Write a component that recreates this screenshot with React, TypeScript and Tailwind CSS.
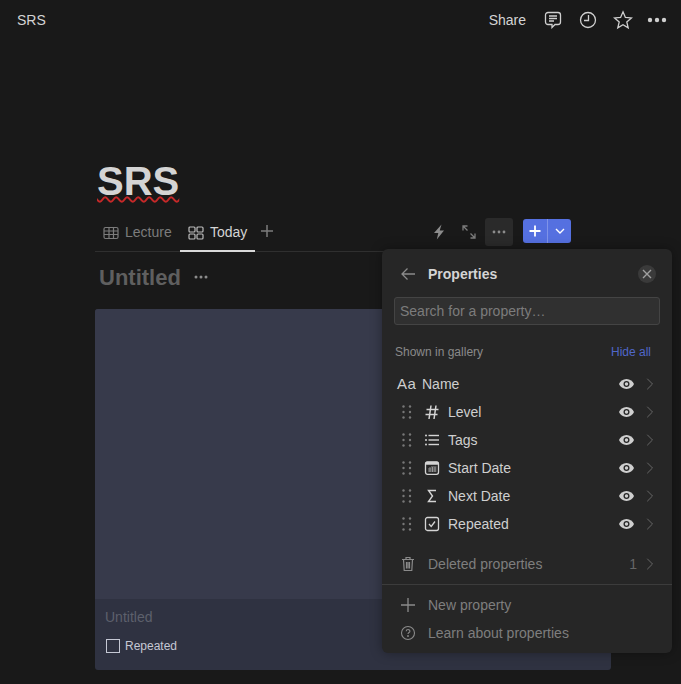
import { ChevronRight } from "lucide-react";

function Grip() {
  return (
    <svg width="10" height="14" viewBox="0 0 10 14" fill="#777777" className="shrink-0">
      {[1.500, 7, 12.500].map((y) =>
        [1.500, 8].map((x) => <circle key={`${x}-${y}`} cx={x} cy={y} r="1.200" />)
      )}
    </svg>
  );
}

function EyeIcon() {
  return (
    <svg width="17" height="12" viewBox="0 0 16 12">
      <path d="M8 1C4.500 1 1.700 3.200 0.500 6 1.700 8.800 4.500 11 8 11s6.300-2.200 7.500-5C14.300 3.200 11.500 1 8 1z" fill="#cfcfcf" />
      <circle cx="8" cy="6" r="3" fill="#262626" />
      <circle cx="8" cy="6" r="1.700" fill="#cfcfcf" />
    </svg>
  );
}

function TypeIcon({ type }: { type: string }) {
  if (type === "hash")
    return (
      <svg width="16" height="16" viewBox="0 0 16 16" fill="none" stroke="#d4d4d4" strokeWidth="1.500">
        <path d="M7 1.500 5 15M12 1.500l-2 13.500M2.500 5.500h12M1.500 10.500h12" />
      </svg>
    );
  if (type === "list")
    return (
      <svg width="16" height="16" viewBox="0 0 16 16" fill="#d4d4d4">
        <rect x="1" y="2.500" width="2" height="2" rx="1" />
        <rect x="1" y="7" width="2" height="2" rx="1" />
        <rect x="1" y="11.500" width="2" height="2" rx="1" />
        <rect x="4.500" y="2.800" width="10.500" height="1.400" />
        <rect x="4.500" y="7.300" width="10.500" height="1.400" />
        <rect x="4.500" y="11.800" width="10.500" height="1.400" />
      </svg>
    );
  if (type === "date")
    return (
      <svg width="16" height="16" viewBox="0 0 16 16" fill="none">
        <rect x="1.500" y="1.800" width="13" height="12.500" rx="2" stroke="#d4d4d4" strokeWidth="1.300" />
        <rect x="1.500" y="1.800" width="13" height="3" rx="1" fill="#d4d4d4" />
        <path d="M7 7h5.500M4 9h8.500M4 11h8.500M6 7v5M8.500 7v5M11 7v5" stroke="#a8a8a8" strokeWidth="0.800" />
      </svg>
    );
  if (type === "sigma")
    return (
      <svg width="16" height="16" viewBox="0 0 16 16" fill="none" stroke="#d4d4d4" strokeWidth="1.400">
        <path d="M12 2.500H4.500L8.500 8 4.500 13.500H12" />
      </svg>
    );
  return (
    <svg width="16" height="16" viewBox="0 0 16 16" fill="none" stroke="#d4d4d4" strokeWidth="1.300">
      <rect x="1.500" y="1.500" width="13" height="13" rx="2" />
      <path d="M5 8l2.200 2.500L11 5.500" />
    </svg>
  );
}

const rows = [
  { name: "Level", type: "hash" },
  { name: "Tags", type: "list" },
  { name: "Start Date", type: "date" },
  { name: "Next Date", type: "sigma" },
  { name: "Repeated", type: "check" },
];

function RowEnd() {
  return (
    <div className="ml-auto flex items-center gap-[5px]">
      <EyeIcon />
      <ChevronRight size={20} color="#666666" strokeWidth={1.200} />
    </div>
  );
}

function PropertiesPanel() {
  return (
    <div className="absolute left-[382px] top-[249px] h-[404px] w-[290px] rounded-md bg-[#262626] text-[14px] shadow-[0_0_12px_rgba(0,0,0,0.35)]">
      <div className="flex h-[50px] items-center pl-[18px] pr-[16px]">
        <svg width="16" height="14" viewBox="0 0 16 14" fill="none" stroke="#8a8a8a" strokeWidth="1.300">
          <path d="M15 7H2M7.500 1.500 2 7l5.500 5.500" />
        </svg>
        <span className="ml-[12px] font-bold text-[#d4d4d4]">Properties</span>
        <div className="ml-auto flex h-[18px] w-[18px] items-center justify-center rounded-full bg-[#3a3a3a]">
          <svg width="10" height="10" viewBox="0 0 10 10" stroke="#a0a0a0" strokeWidth="1.400">
            <path d="M1 1l8 8M9 1l-8 8" />
          </svg>
        </div>
      </div>
      <div className="mx-[12px] mt-[-2px] flex h-[28px] items-center rounded-[3px] border border-[#444444] bg-[#303030] px-[5px] text-[#7c7c7c]">
        Search for a property…
      </div>
      <div className="mt-[18px] flex items-center justify-between pl-[13px] pr-[21px] text-[12px]">
        <span className="text-[#8a8a8a]">Shown in gallery</span>
        <span className="text-[#5067c9]">Hide all</span>
      </div>
      <div className="mt-[9px]">
        <div className="flex h-[28px] items-center pl-[15px] pr-[12px] text-[#cfcfcf]">
          <span className="w-[25px] text-[15px] font-medium tracking-[0.5px]">Aa</span>
          <span>Name</span>
          <RowEnd />
        </div>
        {rows.map((row) => (
          <div key={row.name} className="flex h-[28px] items-center pl-[20px] pr-[12px] text-[#cfcfcf]">
            <Grip />
            <div className="ml-[12px] flex w-[22px] shrink-0">
              <TypeIcon type={row.type} />
            </div>
            <span className="ml-[2px]">{row.name}</span>
            <RowEnd />
          </div>
        ))}
      </div>
      <div className="mt-[12px] flex h-[28px] items-center pl-[18px] pr-[12px] text-[#7e7e7e]">
        <svg width="16" height="16" viewBox="0 0 16 16" fill="none" stroke="#8a8a8a" strokeWidth="1.200">
          <path d="M2 3.500h12M6 3.500V1.500h4v2M3.500 3.500l.7 11h7.600l.7-11M6.500 6v6.500M8 6v6.500M9.500 6v6.500" />
        </svg>
        <span className="ml-[12px]">Deleted properties</span>
        <div className="ml-auto flex items-center gap-[3px] text-[#666666]">
          <span>1</span>
          <ChevronRight size={20} color="#666666" strokeWidth={1.200} />
        </div>
      </div>
      <div className="mt-[6px] border-t border-[#3c3c3c] pt-[6px]">
        <div className="flex h-[28px] items-center pl-[18px] text-[#7e7e7e]">
          <svg width="16" height="16" viewBox="0 0 16 16" stroke="#8a8a8a" strokeWidth="1.300">
            <path d="M8 1v14M1 8h14" />
          </svg>
          <span className="ml-[12px]">New property</span>
        </div>
        <div className="flex h-[28px] items-center pl-[18px] text-[#7e7e7e]">
          <svg width="16" height="16" viewBox="0 0 16 16" fill="none" stroke="#8a8a8a" strokeWidth="1.100">
            <circle cx="8" cy="8" r="6.500" />
            <path d="M6.200 6.300C6.300 4 9.900 4 9.900 6.200 9.900 7.500 8 7.600 8 9" />
            <circle cx="8" cy="11" r="0.400" />
          </svg>
          <span className="ml-[12px]">Learn about properties</span>
        </div>
      </div>
    </div>
  );
}

export default function App() {
  return (
    <div className="relative h-[684px] w-[681px] overflow-hidden bg-[#191919] font-['Liberation_Sans',sans-serif] text-[14px]">
      <div className="flex h-[40px] items-center pl-[17px] pr-[15px] text-[#d4d4d4]">
        <span>SRS</span>
        <div className="ml-auto flex items-center">
          <span>Share</span>
          <svg width="18" height="18" viewBox="0 0 18 18" fill="none" stroke="#cfcfcf" strokeWidth="1.300" className="ml-[18px]">
            <path d="M4 1.500h10a2.500 2.500 0 0 1 2.500 2.500v7a2.500 2.500 0 0 1-2.500 2.500h-3l-3 3v-3H4A2.500 2.500 0 0 1 1.500 11V4A2.500 2.500 0 0 1 4 1.500z" />
            <path d="M5 5h8M5 7.500h8M5 10h5" />
          </svg>
          <svg width="18" height="18" viewBox="0 0 18 18" fill="none" stroke="#cfcfcf" strokeWidth="1.300" className="ml-[17px]">
            <circle cx="9" cy="9" r="7.500" />
            <path d="M9.500 4v5.500H5" />
          </svg>
          <svg width="20" height="20" viewBox="0 0 20 20" fill="none" stroke="#cfcfcf" strokeWidth="1.300" className="ml-[16px]">
            <path d="M10 1.800l2.400 5.600 6 .5-4.600 4 1.400 5.900L10 14.700l-5.200 3.100 1.400-5.900-4.600-4 6-.5z" />
          </svg>
          <svg width="20" height="6" viewBox="0 0 20 6" fill="#cfcfcf" className="ml-[14px] mr-[-1px]">
            <circle cx="3" cy="3" r="2.200" />
            <circle cx="10" cy="3" r="2.200" />
            <circle cx="17" cy="3" r="2.200" />
          </svg>
        </div>
      </div>

      <div className="ml-[95px] mr-[70px] mt-[118px]">
        <h1 className="pl-[2px] text-[40px] font-bold leading-[46px] text-[#d4d4d4] underline decoration-[#c62828] decoration-wavy decoration-[1.5px] underline-offset-[1px]">
          SRS
        </h1>
        <div className="mt-[10px] flex h-[38px] items-center border-b border-[#2f2f2f] pr-[40px]">
          <div className="flex h-[38px] w-[85px] items-center pl-[8px] text-[#7c7c7c]">
            <svg width="16" height="14" viewBox="0 0 16 14" fill="none" stroke="#7c7c7c" strokeWidth="1.200">
              <rect x="1" y="1.500" width="14" height="11" rx="1.500" />
              <path d="M1 5h14M1 8.500h14M6 1.500v11M10.500 1.500v11" />
            </svg>
            <span className="ml-[6px]">Lecture</span>
          </div>
          <div className="flex h-[38px] w-[75px] items-center border-b-2 border-[#d9d9d9] pl-[8px] pt-[2px] text-[#d4d4d4]">
            <svg width="16" height="14" viewBox="0 0 16 14" fill="none" stroke="#bdbdbd" strokeWidth="1.200">
              <rect x="1" y="1" width="6" height="5" rx="1" />
              <rect x="9" y="1" width="6" height="5" rx="1" />
              <rect x="1" y="8" width="6" height="5" rx="1" />
              <rect x="9" y="8" width="6" height="5" rx="1" />
            </svg>
            <span className="ml-[6px]">Today</span>
          </div>
          <svg width="14" height="14" viewBox="0 0 14 14" stroke="#7c7c7c" strokeWidth="1.500" className="ml-[5px] mb-[4px]">
            <path d="M7 1v12M1 7h12" />
          </svg>
          <div className="ml-auto flex items-center pb-[2px]">
            <svg width="14" height="16" viewBox="0 0 14 16" fill="#8c8c8c">
              <path d="M9.500 0.500 2 9H6.300L4.800 15.500 12 6.500H7.700z" />
            </svg>
            <svg width="14" height="14" viewBox="0 0 14 14" fill="none" stroke="#7c7c7c" strokeWidth="1.300" className="ml-[16px]">
              <path d="M1 1l4.500 4.500M8.500 8.500L13 13M1 5.500V1h4.500M13 8.500V13H8.500" />
            </svg>
            <div className="ml-[9px] flex h-[28px] w-[28px] items-center justify-center rounded-[3px] bg-[#2a2a2a]">
              <svg width="14" height="4" viewBox="0 0 14 4" fill="#8c8c8c">
                <circle cx="2" cy="2" r="1.400" />
                <circle cx="7" cy="2" r="1.400" />
                <circle cx="12" cy="2" r="1.400" />
              </svg>
            </div>
            <div className="mb-[2px] ml-[10px] flex h-[24px] w-[48px] items-center rounded-[3px] bg-[#5570e0]">
              <div className="flex h-full w-[25px] items-center justify-center border-r border-[#7f93e8]">
                <svg width="12" height="12" viewBox="0 0 12 12" stroke="#ffffff" strokeWidth="1.800">
                  <path d="M6 0.500v11M0.500 6h11" />
                </svg>
              </div>
              <div className="flex flex-1 items-center justify-center">
                <svg width="10" height="6" viewBox="0 0 10 6" fill="none" stroke="#ffffff" strokeWidth="1.400">
                  <path d="M1 1l4 4 4-4" />
                </svg>
              </div>
            </div>
          </div>
        </div>
        <div className="mt-[11px] flex h-[28px] items-center pl-[4px]">
          <span className="text-[22px] font-bold text-[#5f5f5f]">Untitled</span>
          <svg width="14" height="4" viewBox="0 0 14 4" fill="#8c8c8c" className="ml-[13px]">
            <circle cx="2" cy="2" r="1.500" />
            <circle cx="7" cy="2" r="1.500" />
            <circle cx="12" cy="2" r="1.500" />
          </svg>
        </div>
        <div className="mt-[18px] h-[361px] w-[516px] overflow-hidden rounded-[3px] bg-[#2f3241]">
          <div className="h-[290px] bg-[#373a4b]"></div>
          <div className="pl-[10px] pt-[8px] text-[#5d606c]">Untitled</div>
          <div className="mt-[9px] flex items-center pl-[11px] text-[12px] text-[#c5c8d4]">
            <div className="h-[14px] w-[14px] border-[1.5px] border-[#c5c8d4]"></div>
            <span className="ml-[5px]">Repeated</span>
          </div>
        </div>
      </div>

      <PropertiesPanel />
    </div>
  );
}
